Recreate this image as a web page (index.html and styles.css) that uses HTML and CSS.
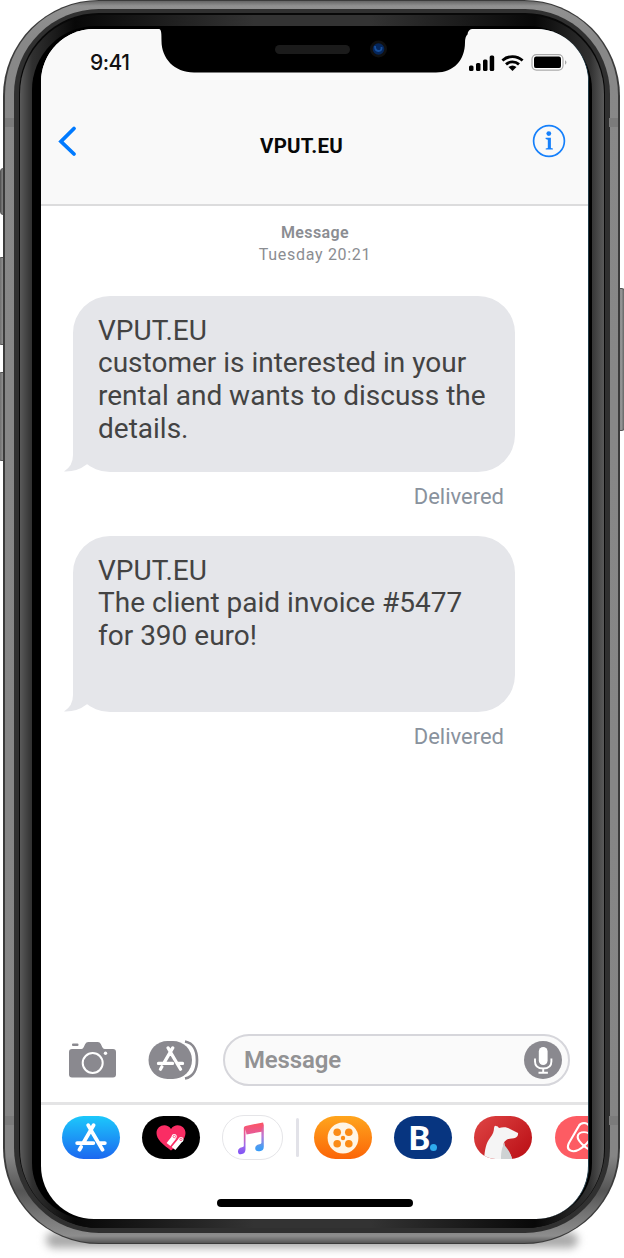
FILE: index.html
```html
<!DOCTYPE html>
<html lang="en">
<head>
<meta charset="utf-8">
<title>Messages</title>
<link rel="stylesheet" href="styles.css">
</head>
<body>
<svg class="defs" aria-hidden="true">
  <defs>
    <linearGradient id="note" gradientUnits="userSpaceOnUse" x1="0" y1="6" x2="0" y2="38"><stop offset="0" stop-color="#fb5568"/><stop offset=".3" stop-color="#e65a98"/><stop offset=".65" stop-color="#a06bea"/><stop offset="1" stop-color="#7a4ff8"/></linearGradient>
    <linearGradient id="noteBlue" gradientUnits="userSpaceOnUse" x1="0" y1="6" x2="0" y2="36"><stop offset="0" stop-color="#f35779"/><stop offset=".4" stop-color="#bd79d8"/><stop offset=".75" stop-color="#4c9cf0"/><stop offset="1" stop-color="#289bff"/></linearGradient>
    <symbol id="appmark" viewBox="0 0 30 28">
      <g fill="none" stroke="#fff" stroke-width="3.5" stroke-linecap="round">
        <path d="M12.4 2l2.2 3.8M17.4 2L8 18.2M5.7 22.4L4.2 25M14.6 6L25.8 25M2 18.8h15.2M22.8 18.8H28"/>
      </g>
    </symbol>
  </defs>
</svg>
<main class="stage">
  <i class="key mute"></i><i class="key vol-up"></i><i class="key vol-down"></i><i class="key power"></i>
  <div class="shadow"></div>
  <div class="edge"><div class="steel"><div class="rim"><div class="seam"><div class="glass"><div class="bezel">
    <div class="screen">
      <header class="header">
        <div class="status">
          <span class="time">9:41</span>
          <svg class="signals" width="98" height="20" viewBox="0 0 98 20">
            <rect x="0" y="12.5" width="4.5" height="5.5" rx="1.5"/><rect x="7" y="10" width="4.5" height="8" rx="1.5"/><rect x="14" y="6.5" width="4.5" height="11.5" rx="1.5"/><rect x="20.700" y="2.500" width="4.500" height="15.500" rx="1.500"/>
            <g fill="none" stroke="#000" stroke-width="2.800"><path d="M33.400 7.500a15 15 0 0 1 20.200 0M37 11.400a9.600 9.600 0 0 1 13 0"/></g>
            <path d="M39.500 14q4-3 8 0l-4 4z"/>
            <rect x="63" y="1.600" width="31" height="15.500" rx="4.500" fill="#fff" stroke="#aaa" stroke-width="1.200"/><rect x="65" y="3.600" width="27" height="11.500" rx="2.200"/><path d="M96 7.300q3 2.200 0 4.500z" fill="#aaa"/>
          </svg>
        </div>
        <div class="titlebar">
          <svg width="24" height="34" viewBox="0 0 24 34"><path d="M19 4.500L6 17.500l13 12.500" fill="none" stroke="#007aff" stroke-width="3.800" stroke-linecap="round"/></svg>
          <h1 class="title">VPUT.EU</h1>
          <svg width="34" height="34" viewBox="0 0 34 34"><circle cx="17" cy="17" r="15.400" fill="none" stroke="#1680fb" stroke-width="1.700"/><circle cx="16.800" cy="9.600" r="2.400" fill="#1680fb"/><path d="M13.600 13.800h5.300v10.100l2 .5v1.200h-7.200v-1.200l2.100-.5v-8.200l-2.200-.6z" fill="#1680fb"/></svg>
        </div>
      </header>
      <section class="thread">
        <div class="stamp"><b>Message</b><span>Tuesday 20:21</span></div>
        <article class="bubble">
          <svg class="tail" width="32" height="50" viewBox="0 0 32 50"><path d="M9 0v33q0 11-9 16.400 13 .5 22.500-7L32 40V0z"/></svg>
          <p>VPUT.EU<br>customer is interested in your<br>rental and wants to discuss the<br>details.</p>
        </article>
        <div class="delivered">Delivered</div>
        <article class="bubble">
          <svg class="tail" width="32" height="50" viewBox="0 0 32 50"><path d="M9 0v33q0 11-9 16.400 13 .5 22.500-7L32 40V0z"/></svg>
          <p>VPUT.EU<br>The client paid invoice #5477<br>for 390 euro!</p>
        </article>
        <div class="delivered">Delivered</div>
      </section>
      <section class="composer">
        <svg width="48" height="36" viewBox="0 0 48 36">
          <rect x="3" y="1.400" width="6.500" height="2.500" rx="1" fill="#8a898f"/>
          <path fill="#8a898f" d="M3 7h9.500q1.500 0 2.300-2l1.400-3q1-2 3-2h9.600q2 0 3 2l1.400 3q.800 2 2.500 2H44q3 0 3 3v22.500q0 3-3 3H3q-3 0-3-3V10q0-3 3-3z"/>
          <circle cx="23.700" cy="21" r="10" fill="none" stroke="#fff" stroke-width="2"/><circle cx="36.500" cy="11.200" r="1.700" fill="#fff"/>
        </svg>
        <svg class="store" width="51" height="40" viewBox="0 0 51 40">
          <path d="M37 1.500C45.500 3 49 11 49 20s-3.500 17-12 18.500" fill="none" stroke="#8a898f" stroke-width="2.700"/>
          <path d="M19.500 1H25a19 19 0 0 1 0 38h-5.500a19 19 0 0 1 0-38z" fill="#8a898f"/>
          <use href="#appmark" x="8.500" y="6" width="28" height="26"/>
        </svg>
        <div class="field"><span>Message</span>
          <svg width="38" height="38" viewBox="0 0 38 38"><circle cx="19" cy="19" r="19" fill="#8a898f"/><rect x="14.800" y="6" width="8.800" height="18" rx="4.400" fill="#fff"/><path d="M11 17.500v3q0 7 8.200 7t8.200-7v-3M19.200 27.500v4M14.500 31.700h9.400" fill="none" stroke="#fff" stroke-width="1.900"/></svg>
        </div>
      </section>
      <nav class="apps">
        <span class="pill store-app"><svg width="32" height="30"><use href="#appmark" width="32" height="30"/></svg></span>
        <span class="pill touch-app"><svg width="32" height="28" viewBox="0 0 32 28"><path d="M16 26.500C8 20.500 1.500 15.500 1.500 9 1.500 1 12-1.500 16 5c4-6.500 14.500-4 14.500 4 0 6.500-6.500 11.500-14.500 17.500z" fill="#fa2d64"/><path d="M13.500 20.500l5.500-7M18.500 24.500l7.500-9" stroke="#fff" stroke-width="4.800"/><g fill="#fff" stroke="#fa2d64" stroke-width=".7"><circle cx="19.200" cy="12.600" r="2.500" stroke="none"/><circle cx="26" cy="15.500" r="2.500" stroke="none"/><circle cx="19.300" cy="12.500" r="1.200"/><circle cx="26" cy="15.400" r="1.200"/></g></svg></span>
        <span class="pill music-app"><svg width="30" height="40" viewBox="0 0 30 40"><path d="M8.500 11.300v20q0 4.800-4.700 5Q1 36.300 1 33.400q0-3.300 4-4.100 1.800-.3 1.800-1.300V10q0-1.800 1.700-2.100L26 4.400v9L9.500 16.500z" fill="url(#note)"/><path d="M26.800 4.200v24.200q0 4.300-4.200 4.900-4.400.5-4.400-3 0-3.200 4.200-4 2-.3 2-1.300V13z" fill="url(#noteBlue)"/></svg></span>
        <i class="divider"></i>
        <span class="pill film-app"><svg width="32" height="32" viewBox="0 0 32 32"><circle cx="16" cy="16" r="15.400" fill="#fff5e5"/><g fill="#fb8b15"><circle cx="10.200" cy="10.200" r="3.800"/><circle cx="21.800" cy="10.200" r="3.800"/><circle cx="10.200" cy="21.800" r="3.800"/><circle cx="21.800" cy="21.800" r="3.800"/><circle cx="16" cy="16" r="2.200"/></g></svg></span>
        <span class="pill booking-app"><b>B</b><i></i></span>
        <span class="pill bear-app"><svg width="58" height="43" viewBox="0 0 58 43"><path d="M10 43c1-10 2-16 6-21 3-4 4-7 4-10q.5-3 2-2 2 0 3 2c4-1 8-1 11 1l8 4q.5 3-2 4.500c-3 1.500-7 1-9 2-3 2-4 4-3 7 4 5 7 7 8 12.500z" fill="#f5f5f5"/><path d="M27 43c0-8 1-12 4-17q-1 3 1 5c3 4 5 7 6 12z" fill="#ced2d3"/></svg></span>
        <span class="pill air-app"><svg width="36" height="32" viewBox="0 0 34 34" preserveAspectRatio="none"><path d="M17 25.500c-4-4-6-7-6-9.500 0-7 12-7 12 0 0 2.500-2 5.500-6 9.500-5 5-9 6.500-12.500 5C1 29 1.300 26 2.700 22.500L12 4.500c2-4.500 8-4.500 10 0l9.300 18c3 7-5 12-14.300 3z" fill="none" stroke="#fff" stroke-width="2"/></svg></span>
      </nav>
      <div class="home"></div>
    </div>
  </div></div></div></div></div></div>
  <svg class="notch" width="313" height="45" viewBox="0 0 313 45"><path d="M0 0h313v1q-4 .500-4.500 5.500-2.500 2-2.500 8C306 32 295 44.500 277 44.500H35C15 44.500 2.500 30 2.500 13 2.500 6 2.500 1 0 1z"/><rect x="116" y="17" width="75" height="9" rx="4.500" fill="#1b1b1b"/><circle cx="219.500" cy="21" r="8.500" fill="#101010"/><circle cx="219.500" cy="21" r="5.800" fill="#05265b"/><path d="M216 18q0 5 3.500 5t3-4" fill="none" stroke="#174f9c" stroke-width="1.800"/></svg>
  <i class="band lt"></i><i class="band rt"></i><i class="band lb"></i><i class="band rb"></i>
</main>
</body>
</html>
```
FILE: styles.css
```css
* { box-sizing: border-box; }
body { margin: 0; background: #fff; font-family: Roboto, "Liberation Sans", sans-serif; }
.defs { position: absolute; width: 0; height: 0; }
.stage { position: relative; width: 624px; height: 1258px; overflow: hidden; padding: 0 4px 14px 3px; }

/* phone body, from the outer edge inwards */
.edge { position: relative; height: 1244px; padding: 1px 2px 1px 2px; border-radius: 96px; background: #3b3b3b; }
.steel { height: 1242px; padding: 8px 8px 10px 9px; border-radius: 94px; background: linear-gradient(#666 0, #919191 5px, #888 40px, #858585 1155px, #555 1190px, #777 1215px, #8d8d8d 1235px, #555 100%); }
.rim { height: 1224px; padding: 4px 5px 5px 5px; border-radius: 85px; background: #303030; }
.seam { height: 1215px; padding: 2px 1px 0 1px; border-radius: 80px; background: #080808; }
.glass { height: 1213px; padding: 11px 12px 9px 12px; border-radius: 79px; background: linear-gradient(90deg, #5a5a5a 0, #303030 12px, #080808 55px, #333 40%, #333 60%, #080808 515px, #303030 570px, #5a5a5a 100%); }
.bezel { height: 1193px; padding: 3px 3px 0 9px; border-radius: 64px 64px 56px 56px; background: #000; }
.screen { height: 1190px; border-right: 1px solid #203b48; border-radius: 53px; overflow: hidden; background: #fff; display: flex; flex-direction: column; }
.shadow { position: absolute; left: 46px; right: 46px; top: 1232px; height: 16px; border-radius: 8px; background: #aaa; filter: blur(4px); }
.key { position: absolute; background: linear-gradient(90deg, #666, #999 60%, #666); border: 1px solid #555; border-radius: 3px; }
.mute { left: 0; top: 168px; width: 8px; height: 47px; }
.vol-up { left: -2px; top: 257px; width: 10px; height: 88px; }
.vol-down { left: -2px; top: 372px; width: 10px; height: 89px; }
.power { right: -1px; top: 288px; width: 9px; height: 143px; }
.band { position: absolute; width: 9px; height: 9px; background: #7b7b7b; }
.lt { left: 5px; top: 118px; }
.rt { right: 6px; top: 118px; }
.lb { left: 5px; top: 1116px; }
.rb { right: 6px; top: 1116px; }
.notch { position: absolute; left: 159px; top: 28px; }

/* header */
.header { height: 177px; background: #f9f9f9; border-bottom: 2px solid #dcdcdd; }
.status { display: flex; justify-content: space-between; align-items: center; padding: 22px 21px 0 49px; height: 46px; }
.time { font: 500 21px/24px Inter, sans-serif; letter-spacing: -0.5px; color: #111; }
.signals { overflow: visible; }
.titlebar { display: flex; justify-content: space-between; align-items: center; padding: 49px 22px 0 14px; }
.title { margin: 9px 8px 0 0; font: 700 20.5px/24px Roboto, sans-serif; letter-spacing: .2px; color: #080808; }

/* conversation */
.thread { flex: 1; padding: 16px 73px 0 32px; }
.stamp { display: flex; flex-direction: column; align-items: center; height: 74px; padding-left: 42px; font-size: 16px; line-height: 22px; letter-spacing: .7px; color: #8b8d92; }
.stamp b { font-weight: 600; letter-spacing: .4px; }
.bubble { position: relative; height: 176px; padding: 18.7px 25px; border-radius: 37px; background: #e5e6ea; }
.bubble p { position: relative; margin: 0; font-size: 28px; line-height: 32.8px; color: #434343; white-space: nowrap; }
.tail { position: absolute; left: -9px; bottom: 0; fill: #e5e6ea; }
.delivered { height: 64px; padding: 10px 11px 0 0; text-align: right; font-size: 22px; line-height: 30px; color: #89929d; }

/* composer */
.composer { height: 68px; display: flex; align-items: center; padding: 0 18px 16px 28px; }
.store { margin-left: 31px; }
.field { display: flex; flex: 1; justify-content: space-between; align-items: center; height: 52px; margin-left: 24px; padding: 0 6px 0 19px; border: 2px solid #d6d6db; border-radius: 26px; background: #fafafa; font-weight: 600; font-size: 24px; letter-spacing: -.15px; color: #929294; }
.apps { display: flex; height: 84px; padding: 11px 0 0 21px; border-top: 3px solid #e4e4e5; }
.pill { display: flex; flex: none; width: 58px; height: 43px; margin-right: 22.3px; border-radius: 22px; align-items: center; justify-content: center; overflow: hidden; }
.store-app { background: linear-gradient(#1cc8fb, #1c68f0); }
.touch-app { margin-right: 21.5px; background: #000; }
.music-app { width: 61px; height: 45px; margin: -1px 13px 0 0; border: 1px solid #e5e5e8; }
.divider { flex: none; width: 3px; height: 39px; margin: 2px 15px 0 0; border-radius: 2px; background: #e2e2e8; }
.film-app { background: linear-gradient(#ffa51d, #fb6507); }
.booking-app { background: #073580; color: #fff; }
.booking-app b { font: 700 34px/40px Roboto, sans-serif; }
.booking-app i { width: 7px; height: 7px; margin-top: 19px; border-radius: 50%; background: #2eabee; }
.bear-app { background: linear-gradient(135deg, #df4545, #b90d13); }
.air-app { background: #fd5c63; }
.home { flex: none; width: 196px; height: 8px; margin: 13px 0 12px 176px; border-radius: 4px; background: #000; }
```
